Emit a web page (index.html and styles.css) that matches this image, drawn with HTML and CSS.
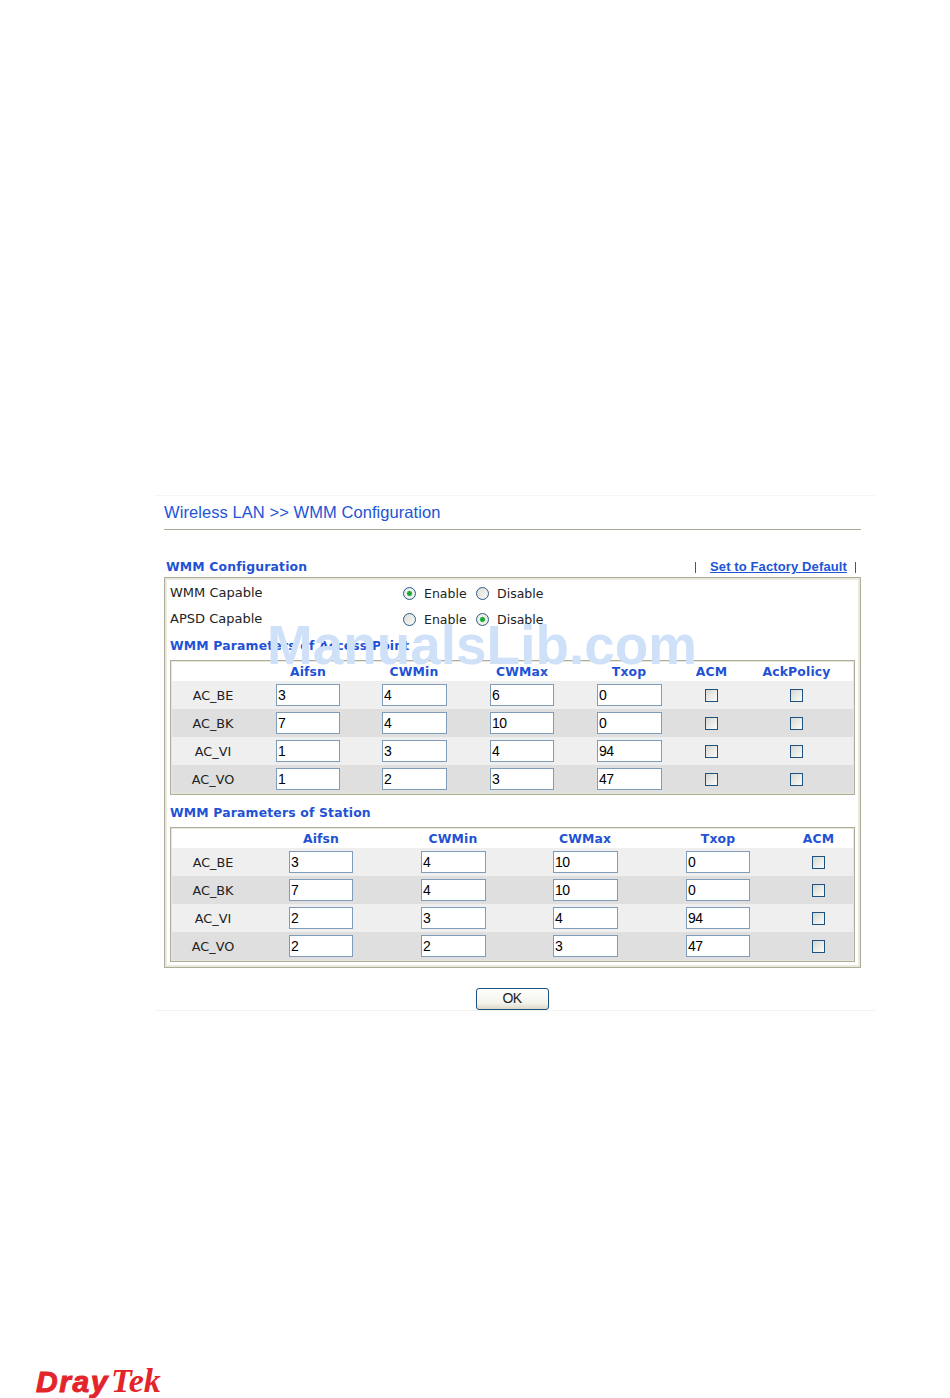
FILE: index.html
```html
<!DOCTYPE html>
<html lang="en">
<head>
<meta charset="utf-8">
<title>WMM Configuration</title>
<link rel="stylesheet" href="styles.css">
</head>
<body>
<div class="page">
  <main class="screen">
    <h1 class="title">Wireless LAN &gt;&gt; WMM Configuration</h1>
    <div class="sect-head">
      <h2 class="sect-title">WMM Configuration</h2>
      <div class="links"><span class="sep"></span><a href="#" class="link">Set to Factory Default</a><span class="sep"></span></div>
    </div>
    <section class="panel">
      <div class="opt-row"><span class="opt-label">WMM Capable</span><input type="radio" name="wmm" class="radio" checked><span class="opt-text">Enable</span><input type="radio" name="wmm" class="radio radio-second"><span class="opt-text">Disable</span></div>
      <div class="opt-row"><span class="opt-label">APSD Capable</span><input type="radio" name="apsd" class="radio"><span class="opt-text">Enable</span><input type="radio" name="apsd" class="radio radio-second" checked><span class="opt-text">Disable</span></div>
      <h3 class="sub-title">WMM Parameters of Access Point</h3>
      <div class="tbl">
        <div class="tr th ap"><span></span><span>Aifsn</span><span>CWMin</span><span>CWMax</span><span>Txop</span><span>ACM</span><span>AckPolicy</span></div>
        <div class="tr odd ap"><span>AC_BE</span><span><input class="num" value="3"></span><span><input class="num wide" value="4"></span><span><input class="num" value="6"></span><span><input class="num wide" value="0"></span><span><input type="checkbox" class="chk"></span><span><input type="checkbox" class="chk"></span></div>
        <div class="tr even ap"><span>AC_BK</span><span><input class="num" value="7"></span><span><input class="num wide" value="4"></span><span><input class="num" value="10"></span><span><input class="num wide" value="0"></span><span><input type="checkbox" class="chk"></span><span><input type="checkbox" class="chk"></span></div>
        <div class="tr odd ap"><span>AC_VI</span><span><input class="num" value="1"></span><span><input class="num wide" value="3"></span><span><input class="num" value="4"></span><span><input class="num wide" value="94"></span><span><input type="checkbox" class="chk"></span><span><input type="checkbox" class="chk"></span></div>
        <div class="tr even ap"><span>AC_VO</span><span><input class="num" value="1"></span><span><input class="num wide" value="2"></span><span><input class="num" value="3"></span><span><input class="num wide" value="47"></span><span><input type="checkbox" class="chk"></span><span><input type="checkbox" class="chk"></span></div>
      </div>
      <h3 class="sub-title sub-station">WMM Parameters of Station</h3>
      <div class="tbl">
        <div class="tr th st"><span></span><span>Aifsn</span><span>CWMin</span><span>CWMax</span><span>Txop</span><span>ACM</span></div>
        <div class="tr odd st"><span>AC_BE</span><span><input class="num" value="3"></span><span><input class="num wide" value="4"></span><span><input class="num wide" value="10"></span><span><input class="num" value="0"></span><span><input type="checkbox" class="chk"></span></div>
        <div class="tr even st"><span>AC_BK</span><span><input class="num" value="7"></span><span><input class="num wide" value="4"></span><span><input class="num wide" value="10"></span><span><input class="num" value="0"></span><span><input type="checkbox" class="chk"></span></div>
        <div class="tr odd st"><span>AC_VI</span><span><input class="num" value="2"></span><span><input class="num wide" value="3"></span><span><input class="num wide" value="4"></span><span><input class="num" value="94"></span><span><input type="checkbox" class="chk"></span></div>
        <div class="tr even st"><span>AC_VO</span><span><input class="num" value="2"></span><span><input class="num wide" value="2"></span><span><input class="num wide" value="3"></span><span><input class="num" value="47"></span><span><input type="checkbox" class="chk"></span></div>
      </div>
    </section>
    <div class="actions"><button type="button" class="ok">OK</button></div>
  </main>
  <div class="watermark">ManualsLib.com</div>
  <footer class="logo"><span class="logo-dray">Dray</span><span class="logo-tek">Tek</span></footer>
</div>
</body>
</html>
```
FILE: styles.css
```css
html, body { margin: 0; padding: 0; background: #fff; overflow: hidden; }
.page {
  position: relative;
  width: 950px;
  height: 1398px;
  padding-top: 495px;
  box-sizing: border-box;
  font-family: "DejaVu Sans", sans-serif;
  overflow: hidden;
}
.screen {
  width: 720px;
  height: 516px;
  box-sizing: border-box;
  margin-left: 155px;
  padding: 0 14px 0 9px;
  border-top: 1px solid #f6f6f2;
  border-bottom: 1px solid #f3f3ec;
}
.title {
  margin: 0;
  height: 34px;
  box-sizing: border-box;
  padding-top: 7px;
  border-bottom: 1px solid #aaa99a;
  font: 400 16.5px/19px "Liberation Sans", sans-serif;
  letter-spacing: 0.07px;
  color: #2154d6;
}
.sect-head {
  height: 47px;
  display: flex;
  align-items: flex-end;
  justify-content: space-between;
}
.sect-title {
  margin: 0 0 2px 2px;
  font: 700 12.4px/17px "DejaVu Sans", sans-serif;
  letter-spacing: 0.17px;
  color: #1f52d4;
}
.links { display: flex; align-items: center; height: 16px; margin: 0 5px 2px 0; }
.sep { width: 1px; height: 11px; background: #f01414; }
.link {
  margin: 0 8px 0 14px;
  font: 700 13px/16px "Liberation Sans", sans-serif;
  letter-spacing: 0.12px;
  color: #2154d6;
  text-decoration: underline;
}
.panel {
  height: 391px;
  box-sizing: border-box;
  padding: 1px 4px 0 4px;
  border: 2px solid #e9e7d9;
  outline: 1px solid #aeac9a;
  outline-offset: -1px;
  box-shadow: inset 0 0 0 1px #ecebdf;
  font-size: 13px;
}
.opt-row {
  height: 26px;
  display: flex;
  align-items: center;
  color: #222;
}
.opt-label { width: 233px; position: relative; top: -1px; }
.opt-text { font-size: 12.5px; }
.radio {
  appearance: none;
  width: 13px;
  height: 13px;
  margin: 0 8px 0 0;
  border: 1px solid #2c5a86;
  border-radius: 50%;
  background: linear-gradient(135deg, #dcdcd4, #fbfbf8);
  box-sizing: border-box;
}
.radio:checked {
  background: radial-gradient(circle, #1fa83a 0 2px, #8fd49d 2.6px, #f4f4ef 3.2px, #dfdfd7 100%);
}
.radio-second { margin-left: 9.5px; }
.sub-title {
  margin: 0;
  height: 28px;
  font: 700 12.4px/28px "DejaVu Sans", sans-serif;
  letter-spacing: 0.17px;
  color: #1f52d4;
}
.sub-station { height: 32px; line-height: 35px; }
.tbl {
  border: 2px solid #e9e7d9;
  outline: 1px solid #aeac9a;
  outline-offset: -1px;
}
.tr {
  display: grid;
  align-items: center;
  justify-items: center;
  height: 28px;
  font-size: 12.8px;
  color: #222;
}
.ap { grid-template-columns: 82px 108px 104px 112px 102px 63px 107px 3px; }
.st { grid-template-columns: 82px 134px 130px 134px 132px 69px; }
.th {
  height: 19px;
  font-weight: 700;
  font-size: 12.4px;
  letter-spacing: 0.15px;
  color: #1f52d4;
  background: #fff;
}
.odd { background: #efefef; }
.even { background: #dfdfdf; }
.num {
  width: 64px;
  height: 22px;
  box-sizing: border-box;
  padding: 0 1px;
  border: 1px solid #7f9db9;
  background: #fff;
  color: #000;
  font: 400 14px/20px "Liberation Sans", sans-serif;
  letter-spacing: -0.5px;
  display: block;
}
.wide { width: 65px; margin-right: -1px; }
.chk {
  appearance: none;
  display: block;
  width: 13px;
  height: 13px;
  margin: 0;
  box-sizing: border-box;
  border: 1px solid #1c5180;
  background: linear-gradient(135deg, #d8d8d2, #fbfbf9);
}
.actions {
  display: flex;
  justify-content: center;
  padding: 20px 1px 0 0;
}
.ok {
  width: 73px;
  height: 22px;
  padding: 0 0 2px;
  border: 1px solid #1c5180;
  border-radius: 3px;
  background: linear-gradient(#ffffff, #f4f3ec 70%, #dcd8c8);
  font: 400 14px/18px "Liberation Sans", sans-serif;
  letter-spacing: -0.5px;
  color: #222;
}
.watermark {
  position: absolute;
  left: 267px;
  top: 614px;
  font: 700 54.9px/62px "Liberation Sans", sans-serif;
  color: #cfe1f9;
  white-space: nowrap;
}
.logo {
  position: absolute;
  left: 36px;
  bottom: 0;
  height: 34px;
  display: flex;
  align-items: baseline;
  color: #e3242b;
  white-space: nowrap;
}
.logo-dray {
  font: italic 700 30px/34px "Liberation Sans", sans-serif;
  letter-spacing: 1.6px;
  -webkit-text-stroke: 1px #e3242b;
}
.logo-tek {
  margin-left: 2px;
  font: italic 700 34px/34px "Liberation Serif", serif;
}
```
